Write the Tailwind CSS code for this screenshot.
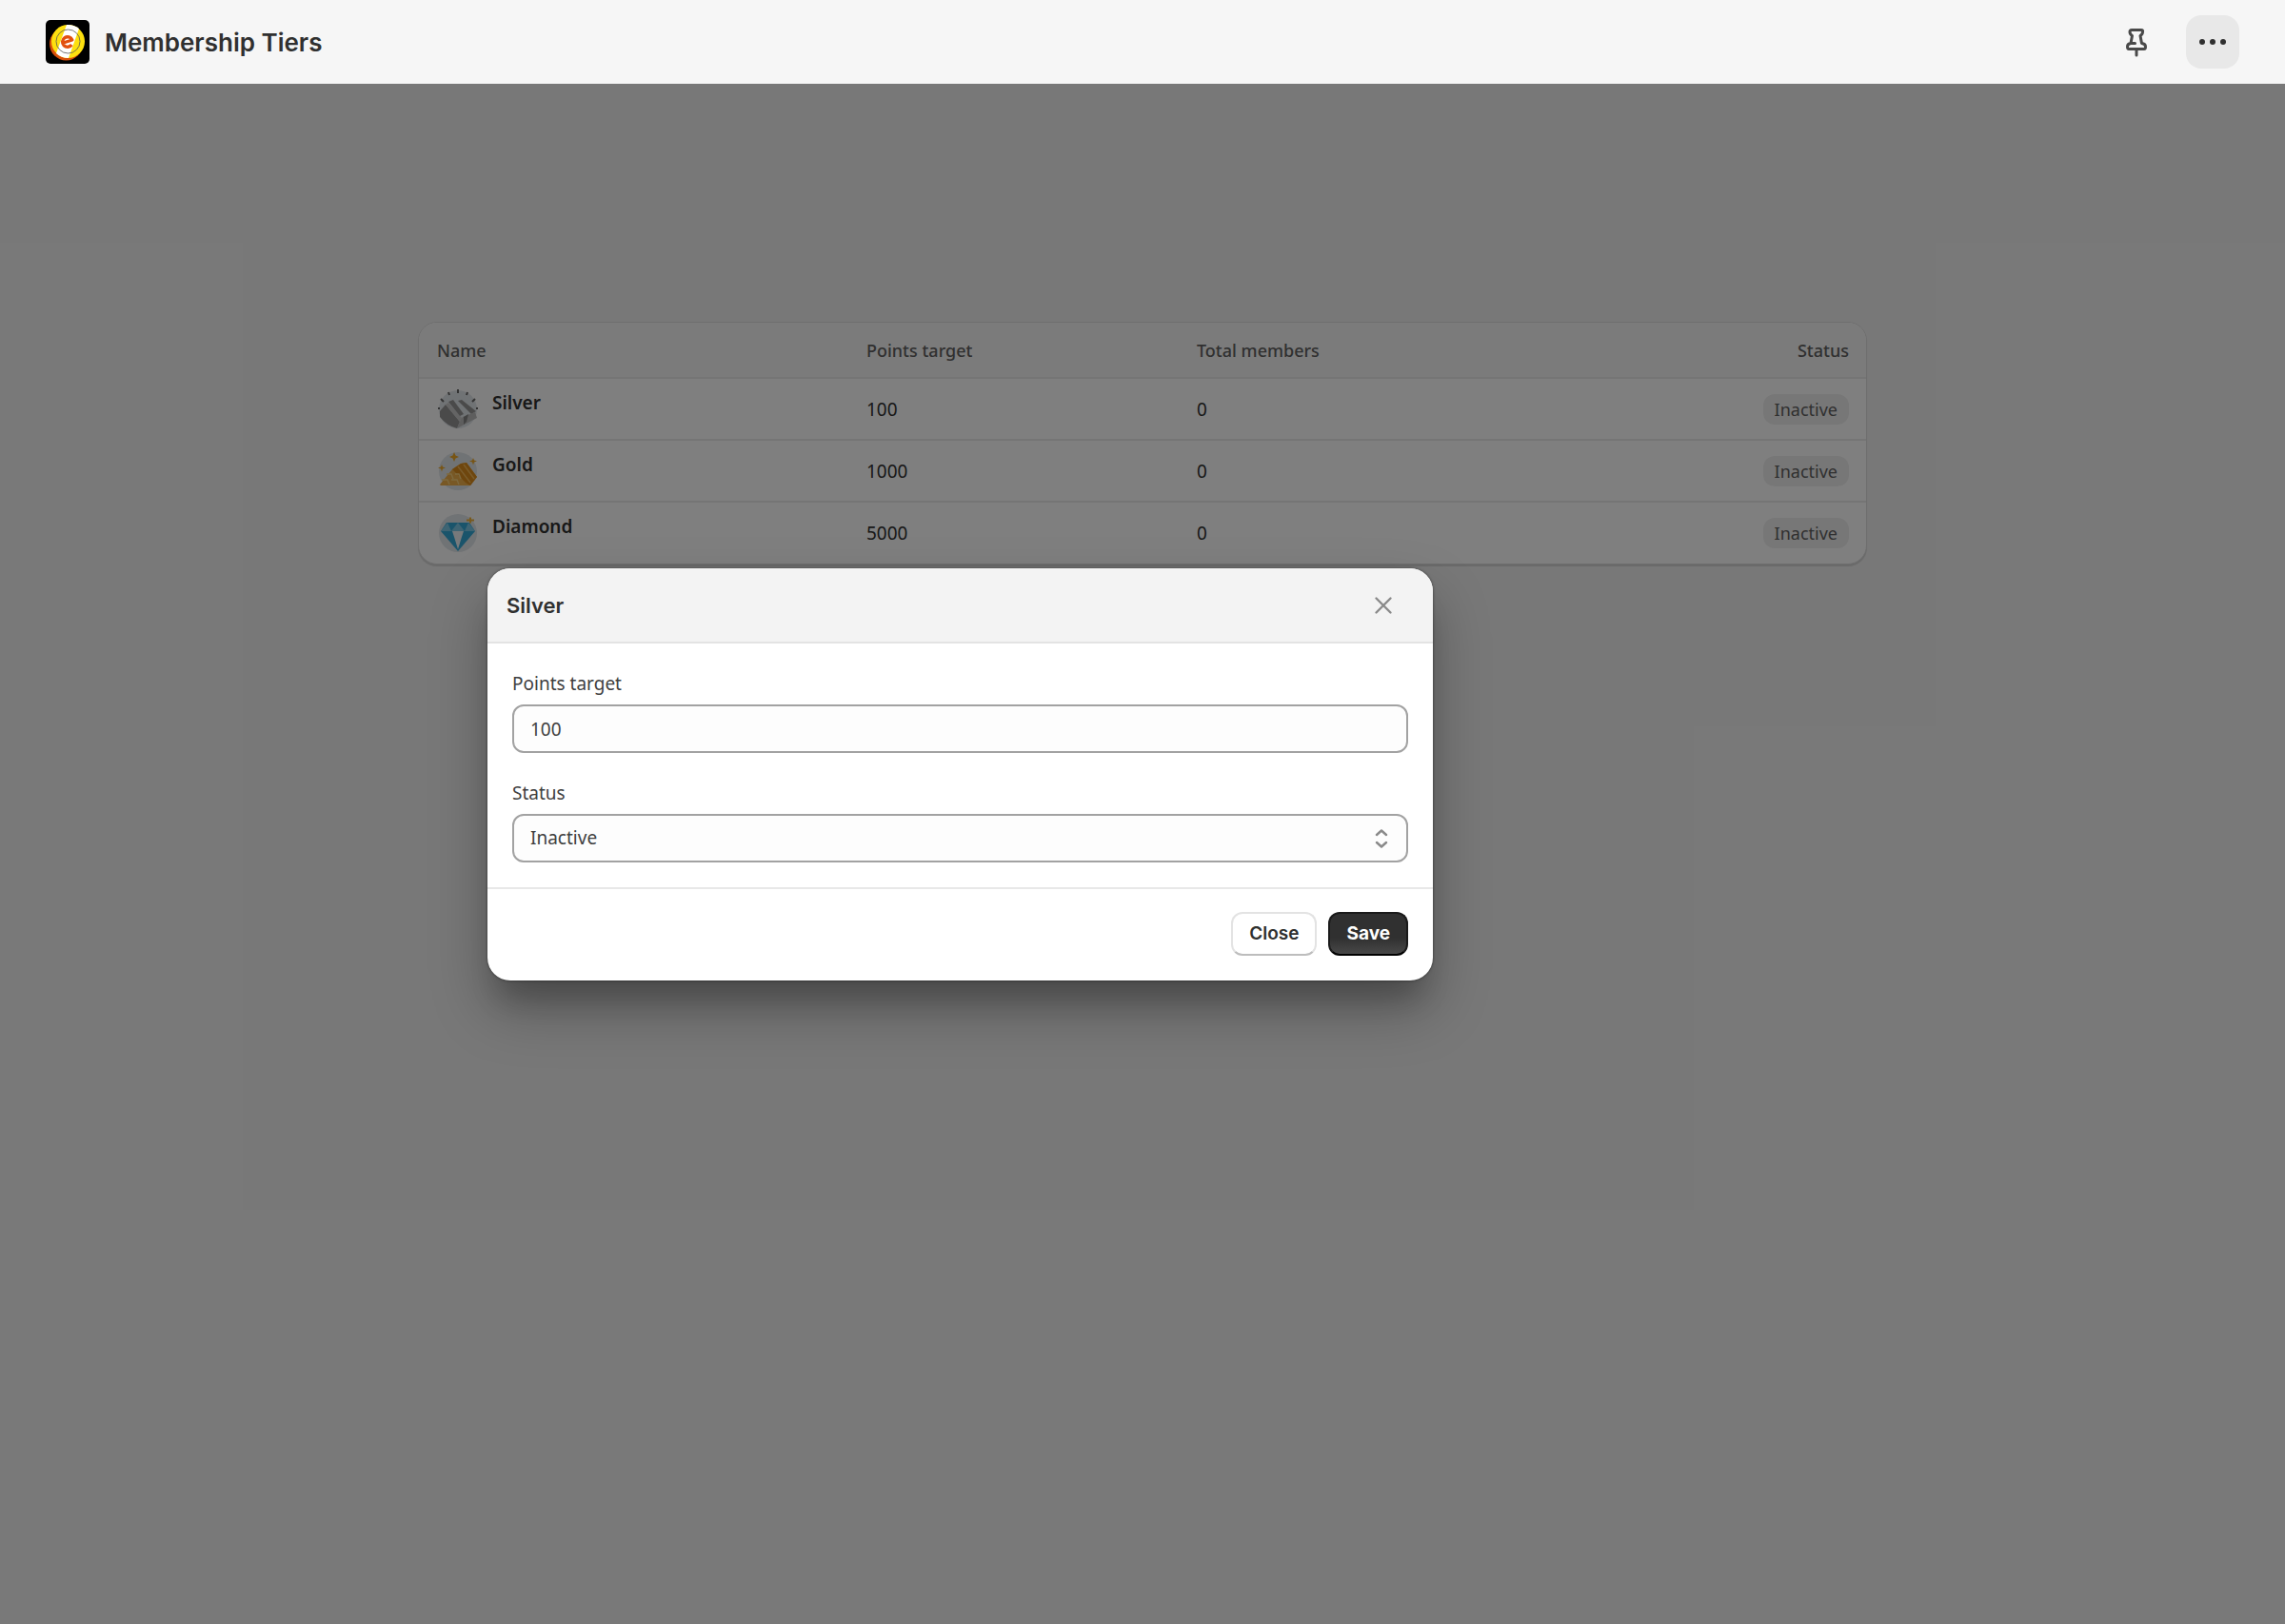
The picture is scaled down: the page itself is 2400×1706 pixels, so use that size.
<!DOCTYPE html>
<html lang="en">
<head>
    <meta charset="UTF-8">
    <meta name="viewport" content="width=device-width, initial-scale=1.0">
    <title>Membership Tiers</title>
    <script src="https://cdn.jsdelivr.net/npm/@tailwindcss/browser@4"></script>
</head>
<body class="min-h-screen flex flex-col bg-[#f1f1f1] font-['Noto_Sans','Open_Sans',sans-serif] text-[#303030]">
    <header class="h-[88px] flex items-center justify-between px-12 bg-[#f6f6f6]">
        <div class="flex items-center gap-4">
            <svg class="size-[46px]" viewBox="0 0 46 46">
                <rect width="46" height="46" rx="5" fill="#000"/>
                <circle cx="21.500" cy="25" r="17.500" fill="#d8500a"/>
                <circle cx="23.500" cy="22.500" r="17.500" fill="#fde00f"/>
                <path d="M22 5 Q29 4.500 35 9 L24 40 Q16 40 11 35 Z" fill="#fff"/>
                <circle cx="23.500" cy="22.500" r="12.500" fill="none" stroke="#555" stroke-width=".8"/>
                <path d="M18.500 24 L27.800 21 A5.300 5.300 0 1 0 27.300 26" fill="none" stroke="#e2500f" stroke-width="3.400" stroke-linejoin="round"/>
            </svg>
            <h1 class="pt-0.5 font-['Inter',sans-serif] text-[26px] leading-8 font-semibold">Membership Tiers</h1>
        </div>
        <div class="flex items-center gap-6">
            <button type="button" aria-label="Pin" class="size-14 flex items-center justify-center">
                <svg class="w-6 h-8" viewBox="0 0 24 32" fill="none" stroke="#4a4a4a" stroke-width="3" stroke-linecap="round" stroke-linejoin="round">
                    <path d="M7 3.500 H17 Q19 3.500 18.500 5.500 Q18.500 8 16 9.500 L17.500 17.500 Q21.500 18 21.500 21 Q21.500 23.500 20 23.500 H4 Q2.500 23.500 2.500 21 Q2.500 18 6 17.500 L7.500 9.500 Q5 8 5 5.500 Q5 3.500 7 3.500 Z"/>
                    <path d="M6 17.500 H10.500"/>
                    <path d="M12 24 V30"/>
                </svg>
            </button>
            <button type="button" aria-label="More actions" class="size-14 flex items-center justify-center rounded-2xl bg-[#e8e8e8]">
                <svg class="w-7 h-2" viewBox="0 0 28 8" fill="#303030">
                    <circle cx="3" cy="4" r="3"/>
                    <circle cx="14" cy="4" r="3"/>
                    <circle cx="25" cy="4" r="3"/>
                </svg>
            </button>
        </div>
    </header>

    <main class="relative grow">
        <div class="max-w-[1522px] mx-auto pt-[250px]">
            <div class="rounded-[20px] bg-white overflow-hidden border border-[#dcdcdc] shadow-[0_2px_1px_#00000020]">
                <table class="w-full table-fixed text-left text-[19px] leading-6">
                    <thead class="bg-[#f7f7f7] text-[18px] text-[#616161]">
                        <tr class="h-[58px]">
                            <th class="w-[451px] pl-[19px] font-medium">Name</th>
                            <th class="w-[347px] pl-[19px] font-medium">Points target</th>
                            <th class="pl-[19px] font-medium">Total members</th>
                            <th class="pr-[18px] text-right font-medium">Status</th>
                        </tr>
                    </thead>
                    <tbody>
                        <tr class="h-[65px] border-t-2 border-[#ebebeb]">
                            <td class="pl-[19px]">
                                <div class="flex items-start gap-3.5">
                                    <svg class="size-11" viewBox="0 0 44 44">
                                        <circle cx="22" cy="22" r="20" fill="#e1e6ea"/>
                                        <path d="M3 24 L9 17 L24 35 L21 42 Q10 39 3 30 Z" fill="#959595"/>
                                        <path d="M9 17 L12 15 L27 32 L24 35 Z" fill="#c8c8c8"/>
                                        <path d="M12 14 L17 12 L28 27 L24 29 Z" fill="#959595"/>
                                        <path d="M22 13 L26 12 L41 24 L36 27 Z" fill="#959595"/>
                                        <path d="M27 30 L40 25 L42 31 L21 42 L24 35 Z" fill="#bcbcbc"/>
                                        <path d="M28 30 L33 27 L31 35 L28 38 Z" fill="#858585"/>
                                        <path d="M22 1 v4 M12 4 l1 3 M32 4 l-1 3 M4 11 l3 3 M40 11 l-3 3 M1 21 h2 M41 21 h2" stroke="#666" stroke-width="2"/>
                                    </svg>
                                    <span class="font-semibold leading-[30px]">Silver</span>
                                </div>
                            </td>
                            <td class="pl-[19px]">100</td>
                            <td class="pl-[19px]">0</td>
                            <td class="pr-[18px] text-right"><span class="inline-block rounded-xl bg-[#efefef] px-3 py-1 text-[18px] text-[#616161]">Inactive</span></td>
                        </tr>
                        <tr class="h-[65px] border-t-2 border-[#ebebeb]">
                            <td class="pl-[19px]">
                                <div class="flex items-start gap-3.5">
                                    <svg class="size-11" viewBox="0 0 44 44">
                                        <circle cx="22" cy="22" r="20" fill="#e1e6ea"/>
                                        <path d="M3 36 L16 20 L25 14 L31 13 L42 28 L35 37 L4 37 Z" fill="#f0b04a"/>
                                        <path d="M16 20 L25 14 L31 13 L42 28 L35 37 L30 34 Z" fill="#dd8d1c"/>
                                        <path d="M22 17 L35 34 M28 15 L39 30" stroke="#f4b754" stroke-width="1.500"/>
                                        <path d="M5 31 h6 l2 5 M15 31 h6 l2 5 M10 25 h5 l2 5 M19 25 h4 l2 5" fill="none" stroke="#fad27c" stroke-width="1.500"/>
                                        <path d="M18 2 l1.500 3.500 3.500 1.500 -3.500 1.500 -1.500 3.500 -1.500 -3.500 -3.500 -1.500 3.500 -1.500 Z M38 8 l1 2.500 3 1 -3 1 -1 3 -1 -3 -3 -1 3 -1 Z M5 15 l1 2.500 3 1 -3 1 -1 3 -1 -3 -3 -1 3 -1 Z" fill="#f0aa28"/>
                                    </svg>
                                    <span class="font-semibold leading-[30px]">Gold</span>
                                </div>
                            </td>
                            <td class="pl-[19px]">1000</td>
                            <td class="pl-[19px]">0</td>
                            <td class="pr-[18px] text-right"><span class="inline-block rounded-xl bg-[#efefef] px-3 py-1 text-[18px] text-[#616161]">Inactive</span></td>
                        </tr>
                        <tr class="h-[65px] border-t-2 border-[#ebebeb]">
                            <td class="pl-[19px]">
                                <div class="flex items-start gap-3.5">
                                    <svg class="size-11" viewBox="0 0 44 44">
                                        <circle cx="22" cy="22" r="20" fill="#e1e6ea"/>
                                        <path d="M10 11 H34 L40 20 L22 41 L4 20 Z" fill="#35a9d6"/>
                                        <path d="M4 20 L11 11 L15 20 Z M15 20 L22 11 L29 20 Z M29 20 L33 11 L40 20 Z" fill="#7cc8e6"/>
                                        <path d="M16 20 H28 L26 26 L22 39 L18 26 Z" fill="#eef3f6"/>
                                        <path d="M31 8.500 h8 M35 5.500 v6" stroke="#f0b43c" stroke-width="2"/>
                                    </svg>
                                    <span class="font-semibold leading-[30px]">Diamond</span>
                                </div>
                            </td>
                            <td class="pl-[19px]">5000</td>
                            <td class="pl-[19px]">0</td>
                            <td class="pr-[18px] text-right"><span class="inline-block rounded-xl bg-[#efefef] px-3 py-1 text-[18px] text-[#616161]">Inactive</span></td>
                        </tr>
                    </tbody>
                </table>
            </div>
        </div>

        <div class="absolute inset-0 bg-black/50 flex items-start pt-[509px] pl-[512px]">
            <form role="dialog" aria-labelledby="tierTitle" class="w-full max-w-[993px] rounded-[24px] overflow-hidden bg-white shadow-[0_0_3px_#0008,0_30px_30px_-12px_#00000030,0_30px_60px_#00000048]">
                <div class="h-[79px] flex items-center justify-between pl-5 pr-10 bg-[#f3f3f3] border-b-2 border-[#e3e3e3]">
                    <h2 id="tierTitle" class="font-['Inter',sans-serif] text-[22px] leading-8 font-semibold">Silver</h2>
                    <button type="button" aria-label="Close dialog" class="size-6 flex items-center justify-center">
                        <svg class="size-5" viewBox="0 0 20 20" fill="none" stroke="#8a8a8a" stroke-width="2.400" stroke-linecap="round">
                            <path d="M2.500 2.500 L17.500 17.500 M17.500 2.500 L2.500 17.500"/>
                        </svg>
                    </button>
                </div>
                <div class="flex flex-col gap-7 px-[26px] pt-7 pb-[26px] text-[19px] text-[#404040]">
                    <div class="flex flex-col gap-2">
                        <label for="pointsTarget" class="leading-7">Points target</label>
                        <input id="pointsTarget" type="text" value="100" class="h-[51px] w-full rounded-xl border-2 border-[#a2a2a2] bg-[#fdfdfd] px-[17px]">
                    </div>
                    <div class="flex flex-col gap-2">
                        <label for="status" class="leading-7">Status</label>
                        <div class="relative">
                            <select id="status" class="h-[51px] w-full appearance-none rounded-xl border-2 border-[#a2a2a2] bg-[#fdfdfd] px-[17px]">
                                <option>Inactive</option>
                                <option>Active</option>
                            </select>
                            <svg class="absolute right-5 top-4 w-4 h-5 pointer-events-none" viewBox="0 0 16 20" fill="none" stroke="#8a8a8a" stroke-width="2.400" stroke-linecap="round" stroke-linejoin="round">
                                <path d="M3 6 L8 1.500 L13 6 M3 14 L8 18.500 L13 14"/>
                            </svg>
                        </div>
                    </div>
                </div>
                <div class="flex justify-end gap-3 border-t-2 border-[#e8e8e8] px-[26px] pt-6 pb-[26px] font-['Inter',sans-serif] text-[19px]">
                    <button type="button" class="h-[46px] rounded-xl bg-white px-[17px] font-semibold border-2 border-[#e3e3e3] border-b-[#bdbdbd]">Close</button>
                    <button type="submit" class="h-[46px] rounded-xl bg-linear-to-b from-[#303030] from-60% to-[#484848] px-[17px] font-bold text-white border-2 border-[#1a1a1a] border-b-black">Save</button>
                </div>
            </form>
        </div>
    </main>
</body>
</html>
